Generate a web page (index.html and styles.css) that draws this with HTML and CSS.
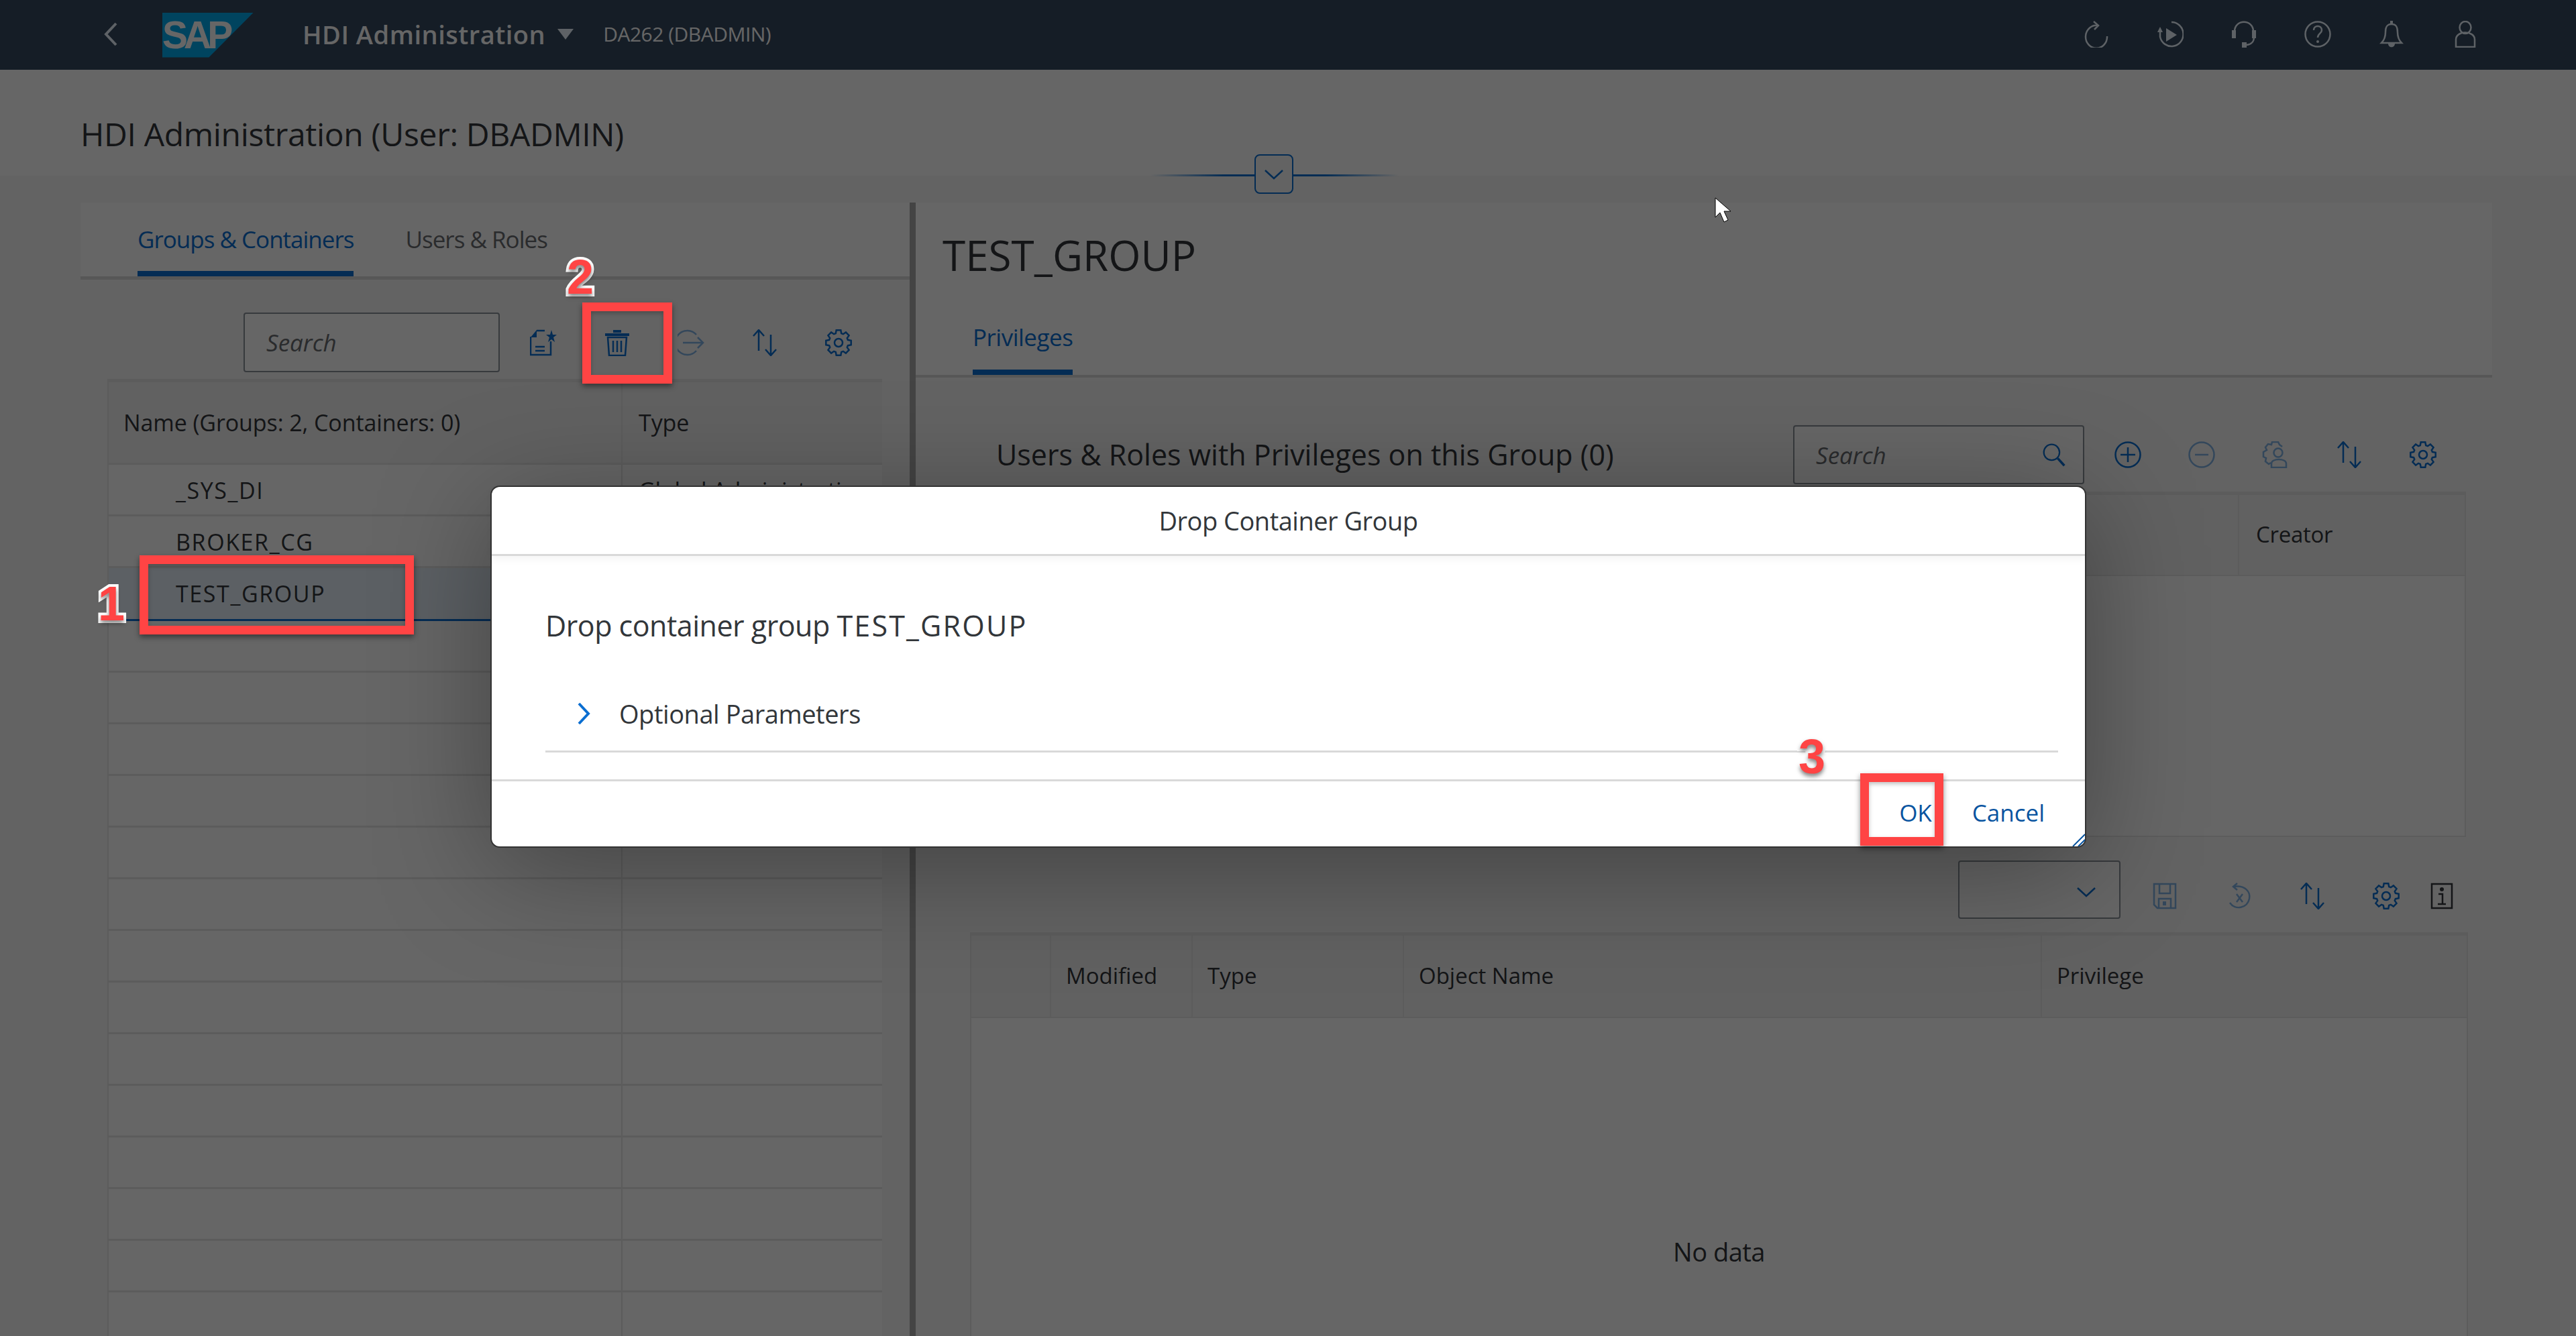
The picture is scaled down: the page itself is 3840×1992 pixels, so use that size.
FILE: index.html
```html
<!DOCTYPE html>
<html lang="en">
<head>
    <meta charset="UTF-8">
    <title>HDI Administration</title>
    <link rel="stylesheet" href="styles.css">
</head>
<body>

    <!-- Shared icons -->
    <svg class="icon-defs" aria-hidden="true">
        <symbol id="i-gear" viewBox="0 0 40 40">
            <path d="M15.8 6.1L16.7 1.3H23.3L24.2 6.1L26.9 7.2L30.9 4.45L35.55 9.1L32.8 13.1L33.9 15.8L38.7 16.7V23.3L33.9 24.2L32.8 26.9L35.55 30.9L30.9 35.55L26.9 32.8L24.2 33.9L23.3 38.7H16.7L15.8 33.9L13.1 32.8L9.1 35.55L4.45 30.9L7.2 26.9L6.1 24.2L1.3 23.3V16.7L6.1 15.8L7.2 13.1L4.45 9.1L9.1 4.45L13.1 7.2Z"/>
            <circle cx="20" cy="20" r="6"/>
        </symbol>
        <symbol id="i-sort" viewBox="0 0 40 40">
            <path d="M11 32V1M3 10L11 1L19 10M29 8V39M21 30L29 39L37 30"/>
        </symbol>
    </svg>

    <!-- Shell bar -->
    <header class="shell">
        <svg class="shell-back" viewBox="0 0 20 36"><path d="M18 2L3 18L18 34"/></svg>
        <div class="sap-logo"><span>SAP</span></div>
        <div class="shell-title">HDI Administration</div>
        <div class="shell-caret"></div>
        <div class="shell-sub">DA262 (DBADMIN)</div>
        <div class="shell-actions">
            <svg class="shell-icon" viewBox="0 0 40 40"><path d="M22 7A16 17 0 1 0 36 23M16 1L23 7L17 13"/></svg>
            <svg class="shell-icon" viewBox="0 0 40 40"><path d="M22 2A17.500 18 0 1 1 5 24L5 15"/><path class="solid" d="M5 9L9 17H1ZM14 11L30 21L14 31Z"/></svg>
            <svg class="shell-icon" viewBox="0 0 40 40"><path d="M6 16C6 -3 34 -3 34 16M35 24C35 32 31 35 24 36"/><path class="solid" d="M2 14H8V26H2ZM32 14H38V26H32ZM17 32H24V40H17Z"/></svg>
            <svg class="shell-icon" viewBox="0 0 40 40"><circle cx="20" cy="20" r="18.500"/><path d="M14 14C14 6 26 6 26 14C26 19 20 19 20 25"/><circle class="solid" cx="20" cy="31" r="2"/></svg>
            <svg class="shell-icon" viewBox="0 0 40 40"><path d="M20 5C12 5 11 11 11 17C11 25 9 29 5 33H35C31 29 29 25 29 17C29 11 28 5 20 5Z"/><path class="solid" d="M18 0H22V5H18ZM15 34H25C25 41 15 41 15 34Z"/></svg>
            <svg class="shell-icon" viewBox="0 0 40 40"><ellipse cx="20" cy="10" rx="8.500" ry="9"/><path d="M6 39V28C6 14 34 14 34 28V39Z"/></svg>
        </div>
    </header>

    <!-- Page title -->
    <div class="page-head">
        <h1>HDI Administration (User: DBADMIN)</h1>
    </div>

    <!-- Master / detail split -->
    <main class="split">
        <section class="master">
            <div class="tabs master-tabs">
                <a class="tab active">Groups &amp; Containers</a>
                <a class="tab">Users &amp; Roles</a>
            </div>
            <div class="master-toolbar">
                <div class="search-box master-search"><span>Search</span></div>
                <button class="tool"><svg viewBox="0 0 40 40"><path d="M10 2H22M31 18V38H1V11"/><path class="solid" d="M10 1V12H1ZM32 1L34 8H40L35 12L37 19L32 15L27 19L29 12L24 8H30Z"/><path d="M8 26H22M8 32H22"/></svg></button>
                <button class="tool"><svg viewBox="0 0 40 40"><path d="M6 12H34L32 39H8Z"/><path class="solid" d="M2 6H38V10H2ZM14 1H26V5H14Z"/><path d="M14 17V34M20 17V34M26 17V34"/></svg></button>
                <button class="tool off"><svg viewBox="0 0 40 40"><path d="M28 8A18 18 0 1 0 28 32M8 20H38M30 12L38 20L30 28"/></svg></button>
                <button class="tool"><svg><use href="#i-sort"/></svg></button>
                <button class="tool"><svg><use href="#i-gear"/></svg></button>
            </div>
            <div class="master-table">
                <div class="row head"><div>Name (Groups: 2, Containers: 0)</div><div>Type</div></div>
                <div class="row"><div class="indent">_SYS_DI</div><div>Global Administration</div></div>
                <div class="row"><div class="indent">BROKER_CG</div><div></div></div>
                <div class="row selected"><div class="indent">TEST_GROUP</div><div></div></div>
                <div class="row"><div></div><div></div></div>
                <div class="row"><div></div><div></div></div>
                <div class="row"><div></div><div></div></div>
                <div class="row"><div></div><div></div></div>
                <div class="row"><div></div><div></div></div>
                <div class="row"><div></div><div></div></div>
                <div class="row"><div></div><div></div></div>
                <div class="row"><div></div><div></div></div>
                <div class="row"><div></div><div></div></div>
                <div class="row"><div></div><div></div></div>
                <div class="row"><div></div><div></div></div>
                <div class="row"><div></div><div></div></div>
                <div class="row"><div></div><div></div></div>
                <div class="row"><div></div><div></div></div>
                <div class="row"><div></div><div></div></div>
            </div>
        </section>

        <div class="splitter"></div>

        <section class="detail">
            <div class="detail-top">
                <h2>TEST_GROUP</h2>
                <div class="tabs detail-tabs">
                    <a class="tab active">Privileges</a>
                </div>
            </div>

            <div class="section-head">
                <h3>Users &amp; Roles with Privileges on this Group (0)</h3>
                <div class="search-box detail-search">
                    <span>Search</span>
                    <svg viewBox="0 0 40 40"><circle cx="16" cy="16" r="13"/><path class="thick" d="M26 26L37 38"/></svg>
                </div>
                <button class="tool"><svg viewBox="0 0 40 40"><circle cx="20" cy="20" r="18.500"/><path d="M20 9V31M9 20H31"/></svg></button>
                <button class="tool off"><svg viewBox="0 0 40 40"><circle cx="20" cy="20" r="18.500"/><path d="M10 20H30"/></svg></button>
                <button class="tool off"><svg viewBox="0 0 40 40"><path d="M30 8L26 5L24 1H15L14 5L9 4L5 9L7 13L2 16V23L6 25L5 30L10 34L13 32"/><circle cx="24" cy="17" r="6.500"/><path d="M14 39V33C14 25 36 25 36 33V39Z"/></svg></button>
                <button class="tool"><svg><use href="#i-sort"/></svg></button>
                <button class="tool"><svg><use href="#i-gear"/></svg></button>
            </div>

            <div class="upper-table">
                <div class="upper-head"><div></div><div>Creator</div></div>
                <div class="upper-body"></div>
            </div>

            <div class="object-toolbar">
                <div class="dropdown">
                    <svg viewBox="0 0 30 16"><path d="M2 2L15 14L28 2"/></svg>
                </div>
                <button class="tool off"><svg viewBox="0 0 40 40"><path d="M4 2H36V38H9L4 33Z"/><path d="M12 2V16H28V2M11 38V24H29V38"/><path class="solid" d="M17 28H22V34H17Z"/></svg></button>
                <button class="tool off"><svg viewBox="0 0 40 40"><path d="M18 1L12 6L18 11M12 6C30 3 38 14 36 24C33 38 15 42 7 30"/><path d="M17 17L26 29M26 17L17 29"/></svg></button>
                <button class="tool"><svg><use href="#i-sort"/></svg></button>
                <button class="tool"><svg><use href="#i-gear"/></svg></button>
                <button class="tool tool-narrow"><svg class="info" viewBox="0 0 40 40"><path d="M5 2H35V38H5Z"/><path d="M15 17H21V32M14 32H26"/><circle class="solid" cx="20" cy="10" r="3"/></svg></button>
            </div>

            <div class="object-table">
                <div class="object-head">
                    <div></div>
                    <div>Modified</div>
                    <div>Type</div>
                    <div>Object Name</div>
                    <div>Privilege</div>
                </div>
                <div class="object-body">No data</div>
            </div>
        </section>
    </main>

    <!-- Collapse control on the header edge -->
    <div class="collapse-line"></div>
    <div class="collapse-btn"><svg viewBox="0 0 30 16"><path d="M2 2L15 14L28 2"/></svg></div>

    <!-- Block layer and dialog -->
    <div class="scrim"></div>

    <div class="dialog">
        <div class="dialog-head">Drop Container Group</div>
        <div class="dialog-body">
            <p class="dialog-msg">Drop container group <span>TEST_GROUP</span></p>
            <div class="expander">
                <svg viewBox="0 0 20 34"><path d="M3 2L17 17L3 32"/></svg>
                <span>Optional Parameters</span>
            </div>
        </div>
        <div class="dialog-foot">
            <a>OK</a>
            <a>Cancel</a>
        </div>
        <svg class="resize-grip" viewBox="0 0 20 20"><path d="M2 20L20 2M10 20L20 10"/></svg>
    </div>

    <!-- Tutorial marks -->
    <div class="mark mark-1"></div>
    <div class="mark mark-2"></div>
    <div class="mark mark-3"></div>
    <div class="step step-1">1</div>
    <div class="step step-2">2</div>
    <div class="step step-3">3</div>

    <svg class="cursor" viewBox="0 0 24 38"><path d="M1 1V30L8 23L14 37L20 34L14 21H24Z"/></svg>

</body>
</html>
```

FILE: styles.css
```css
/* General Styles */
html, body {
    margin: 0;
    padding: 0;
}

body {
    position: relative;
    width: 3840px;
    height: 1992px;
    overflow: hidden;
    font-family: "Open Sans", "Noto Sans", sans-serif;
    color: #32363a;
    background-color: #f7f7f7;
}

h1, h2, h3, p {
    margin: 0;
    font-weight: 400;
}

svg {
    fill: none;
    stroke: currentColor;
    stroke-width: 2.5;
}

svg .solid {
    fill: currentColor;
    stroke: none;
}

.icon-defs {
    width: 0;
    height: 0;
    position: absolute;
}

/* Shell bar */
.shell {
    height: 104px;
    box-sizing: border-box;
    display: flex;
    align-items: center;
    padding: 0 0 3px 155px;
    background-color: #354a5f;
    color: #fff;
}

.shell-back {
    width: 20px;
    height: 36px;
    color: #ebf5ff;
    stroke-width: 4;
}

.sap-logo {
    width: 136px;
    height: 67px;
    margin: 3px 0 0 67px;
    background: #00abee;
    clip-path: polygon(0 0, 100% 0, 51% 100%, 0 100%);
    overflow: hidden;
}

.sap-logo span {
    display: block;
    font-family: "Liberation Sans", sans-serif;
    font-weight: 700;
    font-size: 57px;
    line-height: 67px;
    letter-spacing: -6px;
    color: #fff;
}

.shell-title {
    margin-left: 73px;
    font-size: 38px;
    font-weight: 600;
    letter-spacing: 0.5px;
}

.shell-caret {
    width: 0;
    height: 0;
    margin-left: 18px;
    border-left: 12px solid transparent;
    border-right: 12px solid transparent;
    border-top: 16px solid #ebf5ff;
}

.shell-sub {
    margin-left: 44px;
    font-size: 30px;
    letter-spacing: -0.5px;
}

.shell-actions {
    margin-left: auto;
    margin-right: 145px;
    display: flex;
    gap: 70px;
}

.shell-icon {
    width: 40px;
    height: 40px;
    color: #ebf5ff;
}

/* Page title */
.page-head {
    height: 158px;
    box-sizing: border-box;
    padding: 58px 0 0 120px;
    background-color: #fff;
}

.page-head h1 {
    font-size: 48px;
    line-height: 76px;
    letter-spacing: -0.35px;
}

/* Collapse control */
.collapse-line {
    position: absolute;
    left: 1715px;
    top: 260px;
    width: 370px;
    height: 3px;
    background: linear-gradient(90deg, transparent, #0a6ed1 30%, #0a6ed1 70%, transparent);
}

.collapse-btn {
    position: absolute;
    left: 1870px;
    top: 230px;
    width: 58px;
    height: 59px;
    box-sizing: border-box;
    display: flex;
    align-items: center;
    justify-content: center;
    border: 2px solid #0a6ed1;
    border-radius: 8px;
    background-color: #f7f7f7;
    color: #0a6ed1;
}

.collapse-btn svg {
    width: 30px;
    height: 16px;
}

/* Split layout */
.split {
    display: flex;
    padding: 40px 0 0 120px;
}

.master {
    width: 1236px;
}

.splitter {
    width: 9px;
    height: 1700px;
    background-color: #aaa;
}

.detail {
    width: 2350px;
}

/* Tabs */
.tabs {
    display: flex;
    align-items: flex-end;
    background-color: #fff;
}

.tab {
    padding-bottom: 10px;
    border-bottom: 8px solid transparent;
    font-size: 35px;
    line-height: 74px;
    letter-spacing: -1px;
    color: #6a6d70;
}

.tab.active {
    color: #0a6ed1;
    border-bottom-color: #0a6ed1;
    border-radius: 6px 6px 0 0;
}

.master-tabs {
    height: 110px;
    padding-left: 85px;
    gap: 77px;
    border-bottom: 5px solid #d9d9d9;
}

/* Search field */
.search-box {
    box-sizing: border-box;
    display: flex;
    align-items: center;
    justify-content: space-between;
    padding-left: 32px;
    background-color: #fff;
    border: 2px solid #89919a;
    border-radius: 4px;
    font-size: 35px;
    font-style: italic;
    color: #6a6d70;
}

.master-search {
    width: 382px;
    height: 89px;
}

.detail-search {
    width: 434px;
    height: 88px;
    margin: 0 10px 0 auto;
    padding-right: 25px;
}

.detail-search svg {
    width: 36px;
    height: 36px;
    color: #0a6ed1;
}

.detail-search .thick {
    stroke-width: 4;
}

/* Toolbar buttons */
.tool {
    width: 110px;
    height: 88px;
    padding: 0;
    border: 0;
    background: none;
    display: flex;
    align-items: center;
    justify-content: center;
    color: #0a6ed1;
}

.tool svg {
    width: 40px;
    height: 40px;
}

.tool.off {
    opacity: 0.5;
}

.tool-narrow {
    width: 56px;
}

.tool .info {
    color: #32363a;
}

.master-toolbar {
    display: flex;
    align-items: center;
    height: 89px;
    padding: 49px 0 10px 243px;
}

.master-toolbar .master-search {
    margin-right: 10px;
}

/* Master table */
.master-table {
    margin-left: 40px;
    width: 1155px;
    border-top: 5px solid #e5e5e5;
    border-left: 2px solid #e5e5e5;
    box-sizing: border-box;
    background-color: #fff;
}

.row {
    display: grid;
    grid-template-columns: 764px 1fr;
    height: 77px;
    box-sizing: border-box;
    border-bottom: 3px solid #e5e5e5;
    font-size: 34px;
    line-height: 76px;
    letter-spacing: -0.1px;
}

.row > div {
    padding-left: 22px;
    white-space: nowrap;
    overflow: hidden;
}

.row > div + div {
    padding-left: 24px;
    border-left: 2px solid #e5e5e5;
}

.row .indent {
    padding-left: 100px;
    letter-spacing: 1.6px;
}

.row.head {
    height: 123px;
    line-height: 120px;
    background-color: #f2f2f2;
}

.row.selected {
    height: 79px;
    background-color: #e5f0fa;
    border-bottom-color: #0a6ed1;
}

/* Detail header */
.detail-top {
    background-color: #fff;
}

.detail-top h2 {
    padding: 38px 0 0 40px;
    font-size: 62px;
    line-height: 80px;
}

.detail-tabs {
    height: 139px;
    padding-left: 85px;
    border-bottom: 4px solid #d9d9d9;
}

.detail-tabs .tab {
    padding-bottom: 12px;
    line-height: 72px;
    letter-spacing: -0.5px;
}

/* Section rows */
.section-head {
    display: flex;
    align-items: center;
    height: 88px;
    margin: 71px 0 0 120px;
    padding-right: 48px;
}

.section-head h3 {
    font-size: 43px;
    margin-top: -2px;
}

.upper-table {
    margin: 11px 39px 0 80px;
    height: 515px;
    box-sizing: border-box;
    background-color: #fff;
    border-top: 5px solid #e5e5e5;
    border-left: 2px solid #e5e5e5;
    border-right: 2px solid #e5e5e5;
    border-bottom: 2px solid #e5e5e5;
}

.upper-head {
    display: grid;
    grid-template-columns: 1fr 338px;
    height: 119px;
    background-color: #f2f2f2;
    border-bottom: 2px solid #e5e5e5;
    font-size: 33px;
    line-height: 118px;
    letter-spacing: -0.3px;
}

.upper-head > div + div {
    padding-left: 25px;
    border-left: 2px solid #e5e5e5;
}

.object-toolbar {
    display: flex;
    align-items: flex-start;
    justify-content: flex-end;
    height: 87px;
    margin-top: 35px;
    padding-right: 47px;
}

.object-toolbar .tool {
    height: 106px;
}

.dropdown {
    width: 242px;
    height: 87px;
    box-sizing: border-box;
    margin-right: 11px;
    padding: 6px 34px 0 0;
    display: flex;
    align-items: center;
    justify-content: flex-end;
    background-color: #fff;
    border: 2px solid #89919a;
    border-radius: 4px;
    color: #0a6ed1;
}

.dropdown svg {
    width: 30px;
    height: 16px;
}

/* Objects table */
.object-table {
    margin: 20px 36px 0 81px;
    box-sizing: border-box;
    background-color: #fff;
    border-left: 2px solid #e5e5e5;
    border-right: 2px solid #e5e5e5;
    border-top: 5px solid #e5e5e5;
}

.object-head {
    display: grid;
    grid-template-columns: 117px 211px 315px 951px 1fr;
    height: 121px;
    background-color: #f2f2f2;
    border-bottom: 2px solid #e5e5e5;
    font-size: 33px;
    line-height: 120px;
}

.object-head > div + div {
    padding-left: 22px;
    border-left: 2px solid #e5e5e5;
}

.object-body {
    height: 696px;
    display: flex;
    align-items: center;
    justify-content: center;
    font-size: 38px;
    letter-spacing: -0.5px;
}

/* Block layer */
.scrim {
    position: absolute;
    left: 0;
    top: 0;
    width: 3840px;
    height: 1992px;
    background-color: rgba(0, 0, 0, 0.6);
}

/* Dialog */
.dialog {
    position: absolute;
    left: 733px;
    top: 726px;
    width: 2375px;
    height: 536px;
    box-sizing: border-box;
    background-color: #fff;
    border-radius: 12px;
    box-shadow: 0 0 0 2px #333, 0 30px 170px rgba(0, 0, 0, 0.35);
    display: flex;
    flex-direction: column;
}

.dialog-head {
    height: 100px;
    box-sizing: content-box;
    border-bottom: 3px solid #d9d9d9;
    box-shadow: 0 6px 10px rgba(0, 0, 0, 0.04);
    text-align: center;
    font-size: 38px;
    line-height: 100px;
    letter-spacing: -0.5px;
}

.dialog-body {
    flex: 1;
    padding: 64px 40px 0 80px;
    border-bottom: 3px solid #d9d9d9;
}

.dialog-msg {
    font-size: 43px;
    line-height: 80px;
    letter-spacing: -0.5px;
}

.dialog-msg span {
    letter-spacing: 2.2px;
}

.expander {
    display: flex;
    align-items: center;
    gap: 43px;
    margin-top: 51px;
    padding: 0 0 15px 47px;
    border-bottom: 3px solid #d9d9d9;
    font-size: 38px;
    line-height: 80px;
    letter-spacing: -0.45px;
}

.expander svg {
    width: 20px;
    height: 34px;
    color: #0a6ed1;
    stroke-width: 4;
}

.dialog-foot {
    height: 97px;
    box-sizing: border-box;
    display: flex;
    align-items: center;
    justify-content: flex-end;
    gap: 60px;
    padding: 0 60px 4px 0;
    font-size: 35px;
    color: #0854a0;
}

.resize-grip {
    position: absolute;
    right: 0;
    bottom: 0;
    width: 20px;
    height: 20px;
    color: #0854a0;
    stroke-width: 2;
}

/* Tutorial marks */
.mark {
    position: absolute;
    box-sizing: border-box;
    border: 13px solid #ff4444;
    box-shadow: 0 4px 8px rgba(0, 0, 0, 0.45), inset 0 3px 6px rgba(0, 0, 0, 0.25);
}

.mark-1 {
    left: 208px;
    top: 828px;
    width: 409px;
    height: 118px;
}

.mark-2 {
    left: 868px;
    top: 451px;
    width: 134px;
    height: 121px;
}

.mark-3 {
    left: 2773px;
    top: 1153px;
    width: 124px;
    height: 108px;
}

.step {
    position: absolute;
    font-family: "Liberation Sans", sans-serif;
    font-weight: 700;
    font-size: 72px;
    line-height: 72px;
    color: #ff4444;
    -webkit-text-stroke: 8px #fff;
    paint-order: stroke fill;
    text-shadow: 0 4px 6px rgba(0, 0, 0, 0.5);
}

.step-1 {
    left: 146px;
    top: 864px;
}

.step-2 {
    left: 845px;
    top: 377px;
}

.step-3 {
    left: 2681px;
    top: 1092px;
}

/* Mouse pointer */
.cursor {
    position: absolute;
    left: 2556px;
    top: 294px;
    width: 24px;
    height: 38px;
    fill: #fff;
    stroke: #000;
    stroke-width: 1;
}
```
